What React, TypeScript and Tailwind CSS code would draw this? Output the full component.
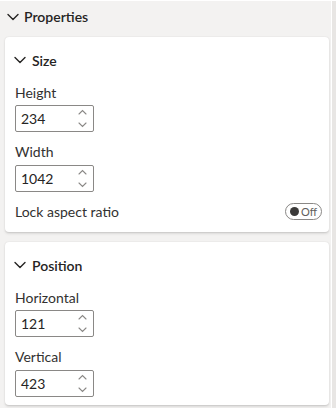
import React from 'react';

const font = { fontFamily: '"Segoe UI", Lato, "Noto Sans", sans-serif' };

function Chevron({ className }: { className?: string }) {
  return (
    <svg width="12" height="8" viewBox="0 0 12 8" className={className} fill="none">
      <path d="M1 1.5 L6 6.5 L11 1.5" stroke="#252423" strokeWidth="1.4" strokeLinecap="round" strokeLinejoin="round" />
    </svg>
  );
}

function SpinInput({ value }: { value: string }) {
  return (
    <div className="relative w-[79px] h-[27px] border border-[#8a8886] rounded-[2px] bg-white flex items-center pl-[5px]">
      <span className="text-[14px] text-[#252423] leading-none">{value}</span>
      <div className="absolute right-[6px] top-[3px] bottom-[3px] flex flex-col justify-between items-center">
        <svg width="9" height="6" viewBox="0 0 9 6" fill="none">
          <path d="M1 5 L4.5 1.5 L8 5" stroke="#8a8886" strokeWidth="1.1" strokeLinecap="round" />
        </svg>
        <svg width="9" height="6" viewBox="0 0 9 6" fill="none">
          <path d="M1 1 L4.5 4.5 L8 1" stroke="#8a8886" strokeWidth="1.1" strokeLinecap="round" />
        </svg>
      </div>
    </div>
  );
}

function Field({ label, value, first }: { label: string; value: string; first?: boolean }) {
  return (
    <div className={first ? '' : 'mt-[10px]'}>
      <div className="text-[14px] leading-[20px] text-[#323130]">{label}</div>
      <div className={first ? 'mt-[2px]' : 'mt-[3px]'}>
        <SpinInput value={value} />
      </div>
    </div>
  );
}

function CardHeading({ title }: { title: string }) {
  return (
    <div className="h-[46px] flex items-center">
      <Chevron className="ml-[-1px]" />
      <span className="ml-[6px] text-[14px] font-semibold text-[#252423]">{title}</span>
    </div>
  );
}

export default function App() {
  return (
    <div style={font} className="w-[336px] h-[408px] bg-[#f3f2f1] flex overflow-hidden border-t border-white">
      <div className="flex-1 flex flex-col">
        <div className="h-[36px] flex items-start pt-[7px] pl-[7px]">
          <Chevron className="mt-[5px]" />
          <span className="ml-[5px] text-[14px] font-semibold text-[#252423] leading-[18px]">Properties</span>
        </div>

        <div className="ml-[5px] mr-[2px] bg-white rounded-[4px] shadow-[0_0.5px_1.5px_rgba(0,0,0,0.1),0_1.5px_3px_rgba(0,0,0,0.08)] pl-[10px] pr-[7px] pb-[11px]">
          <CardHeading title="Size" />
          <Field label="Height" value="234" first />
          <Field label="Width" value="1042" />
          <div className="mt-[9px] h-[20px] flex items-center justify-between">
            <span className="text-[14px] text-[#323130]">Lock aspect ratio</span>
            <div className="w-[37px] h-[17px] rounded-full border border-[#8a8886] flex items-center pl-[4px] gap-[2px]">
              <div className="w-[9px] h-[9px] rounded-full bg-[#3b3a39]" />
              <span className="text-[11px] leading-none text-[#605e5c]">Off</span>
            </div>
          </div>
        </div>

        <div className="mt-[10px] ml-[5px] mr-[2px] bg-white rounded-[4px] shadow-[0_0.5px_1.5px_rgba(0,0,0,0.1),0_1.5px_3px_rgba(0,0,0,0.08)] pl-[10px] pr-[7px] pb-[8px]">
          <CardHeading title="Position" />
          <Field label="Horizontal" value="121" first />
          <Field label="Vertical" value="423" />
        </div>
      </div>
      <div className="w-[5px] border-l border-white bg-[#e8e6e4]" />
    </div>
  );
}
